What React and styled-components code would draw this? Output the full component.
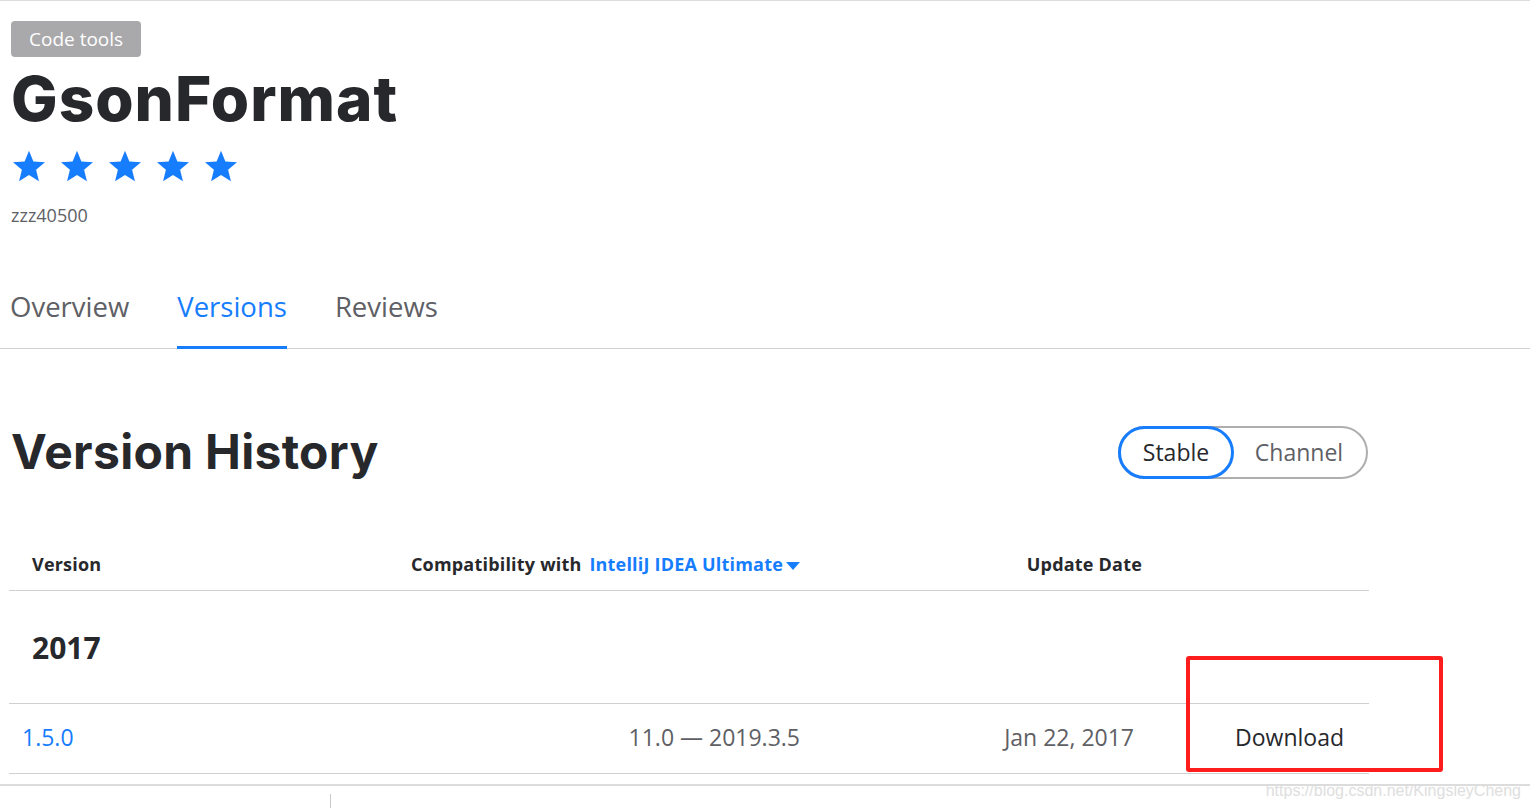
import styled, { createGlobalStyle } from 'styled-components';

const GlobalStyle = createGlobalStyle`
  body {
    margin: 0;
    background: #fff;
    font-family: "Open Sans", "Noto Sans", sans-serif;
    color: #27282c;
  }
`;

const BLUE = '#167dff';

const Star = () => (
  <svg width="34" height="34" viewBox="0 0 24 24">
    <path
      fill={BLUE}
      d="M12 1.2l3.1 7.6 8.2.6-6.3 5.3 2 8L12 18.3l-7 4.4 2-8L.7 9.4l8.2-.6z"
    />
  </svg>
);

const rows = [{ version: '1.5.0', compat: '11.0 — 2019.3.5', date: 'Jan 22, 2017' }];

const App = () => {
  return (
    <Page>
      <GlobalStyle />
      <Header>
        <Badge>Code tools</Badge>
        <Title>GsonFormat</Title>
        <Stars>
          {[0, 1, 2, 3, 4].map(i => (
            <Star key={i} />
          ))}
        </Stars>
        <Vendor>zzz40500</Vendor>
      </Header>

      <Tabs>
        <Tab>Overview</Tab>
        <Tab active>Versions</Tab>
        <Tab>Reviews</Tab>
      </Tabs>

      <Content>
        <HistoryHead>
          <H2>Version History</H2>
          <Toggle>
            <ToggleItem active>Stable</ToggleItem>
            <ToggleItem>Channel</ToggleItem>
          </Toggle>
        </HistoryHead>

        <Table>
          <HeadRow>
            <HeadCell>Version</HeadCell>
            <HeadCell align="right">
              Compatibility with{' '}
              <Product>
                IntelliJ IDEA Ultimate
                <Caret />
              </Product>
            </HeadCell>
            <HeadCell align="right">Update Date</HeadCell>
            <HeadCell />
          </HeadRow>
          <YearRow>2017</YearRow>
          {rows.map(r => (
            <Row key={r.version}>
              <VersionLink>{r.version}</VersionLink>
              <Cell align="right">{r.compat}</Cell>
              <Cell align="right" pad={8}>
                {r.date}
              </Cell>
              <DownloadCell>Download</DownloadCell>
            </Row>
          ))}
        </Table>
        <Highlight />
      </Content>

      <Footer>
        <FooterTick />
        <Watermark>https://blog.csdn.net/KingsleyCheng</Watermark>
      </Footer>
    </Page>
  );
};

export default App;

const Page = styled.div`
  position: relative;
  width: 1530px;
  height: 808px;
  overflow: hidden;
  border-top: 1px solid #dcdcdc;
  box-sizing: border-box;
`;

const Header = styled.div`
  padding: 20px 0 0 11px;
  display: flex;
  flex-direction: column;
  align-items: flex-start;
`;

const Badge = styled.span`
  display: inline-flex;
  align-items: center;
  height: 36px;
  padding: 0 18px;
  border-radius: 4px;
  background: #a9a9ab;
  color: #fff;
  font-size: 19px;
`;

const Title = styled.h1`
  margin: 6px 0 0 0;
  font-family: Inter, "Open Sans", sans-serif;
  font-weight: 800;
  font-size: 62px;
  line-height: 72px;
  letter-spacing: 1px;
  color: #27282c;
`;

const Stars = styled.div`
  display: flex;
  gap: 14px;
  margin: 14px 0 0 1px;
`;

const Vendor = styled.div`
  margin-top: 20px;
  font-size: 18px;
  color: #5e6065;
`;

const Tabs = styled.div`
  display: flex;
  gap: 48px;
  margin-top: 58px;
  padding-left: 10px;
  border-bottom: 1px solid #d2d2d2;
`;

const Tab = styled.div`
  font-size: 27.5px;
  line-height: 36px;
  padding: 4px 0 21px;
  color: ${p => (p.active ? BLUE : '#5e6065')};
  border-bottom: 3px solid ${p => (p.active ? BLUE : 'transparent')};
  margin-bottom: -1px;
`;

const Content = styled.div`
  position: relative;
  width: 1360px;
  margin-left: 9px;
`;

const HistoryHead = styled.div`
  display: flex;
  align-items: center;
  justify-content: space-between;
  margin-top: 75px;
`;

const H2 = styled.h2`
  margin: 0 0 0 2px;
  font-family: Inter, "Open Sans", sans-serif;
  font-weight: 700;
  font-size: 48px;
  line-height: 56px;
  letter-spacing: 0.3px;
  color: #27282c;
`;

const Toggle = styled.div`
  display: flex;
  width: 250px;
  height: 53px;
  box-sizing: border-box;
  border: 2px solid #aeaeae;
  border-radius: 27px;
  margin-right: 1px;
`;

const ToggleItem = styled.div`
  display: flex;
  align-items: center;
  justify-content: center;
  box-sizing: border-box;
  font-size: 23px;
  margin: -2px;
  height: 53px;
  border-radius: 27px;
  ${p =>
    p.active
      ? `width: 116px; border: 3px solid ${BLUE}; color: #27282c;`
      : `flex: 1; color: #5e6065;`}
`;

const Table = styled.div`
  margin-top: 57px;
`;

const grid = `
  display: grid;
  grid-template-columns: 391px 400px 342px 227px;
  align-items: center;
  border-bottom: 1px solid #d0d0d0;
  box-sizing: border-box;
`;

const HeadRow = styled.div`
  ${grid}
  height: 54px;
`;

const HeadCell = styled.div`
  font-size: 18px;
  font-weight: 700;
  letter-spacing: 0.2px;
  text-align: ${p => p.align || 'left'};
  padding: 0 ${p => (p.align === 'right' ? '0' : '23px')};
`;

const Product = styled.span`
  color: ${BLUE};
  margin-left: 3px;
`;

const Caret = styled.span`
  display: inline-block;
  width: 0;
  height: 0;
  margin-left: 3px;
  border-left: 7px solid transparent;
  border-right: 7px solid transparent;
  border-top: 8px solid ${BLUE};
  vertical-align: middle;
`;

const YearRow = styled.div`
  display: flex;
  align-items: center;
  height: 113px;
  padding-left: 23px;
  font-size: 30px;
  font-weight: 700;
  border-bottom: 1px solid #d0d0d0;
  box-sizing: border-box;
`;

const Row = styled.div`
  ${grid}
  height: 70px;
  padding-bottom: 3px;
  font-size: 23px;
`;

const Cell = styled.div`
  text-align: ${p => p.align || 'left'};
  padding-right: ${p => p.pad || 0}px;
  color: #5e6065;
`;

const VersionLink = styled.a`
  color: ${BLUE};
  padding-left: 13px;
`;

const DownloadCell = styled.div`
  text-align: right;
  padding-right: 25px;
  color: #27282c;
`;

const Highlight = styled.div`
  position: absolute;
  left: 1177px;
  bottom: 2px;
  width: 257px;
  height: 116px;
  box-sizing: border-box;
  border: 4px solid #fe1d1d;
  border-radius: 3px;
`;

const Footer = styled.div`
  position: relative;
  margin-top: 10px;
  height: 30px;
  border-top: 2px solid #dcdcdc;
`;

const FooterTick = styled.div`
  position: absolute;
  left: 330px;
  top: 8px;
  width: 1px;
  height: 16px;
  background: #c8c8c8;
`;

const Watermark = styled.div`
  position: absolute;
  right: 9px;
  top: -4px;
  font-family: "Liberation Sans", Arial, sans-serif;
  font-size: 16px;
  color: #dedede;
`;
